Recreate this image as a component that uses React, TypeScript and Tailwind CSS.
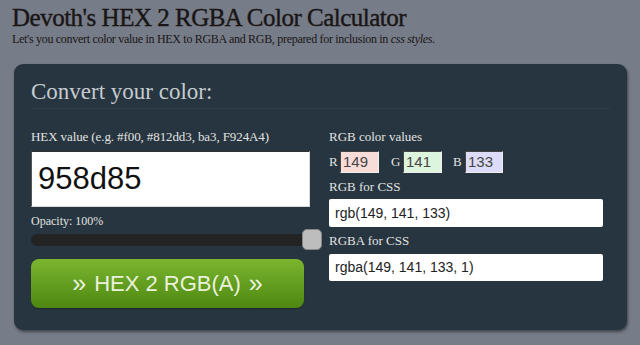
import React, { useState } from 'react';

const serif = "font-['Palatino_Linotype','Liberation_Serif',serif]";
const sans = "font-['Liberation_Sans',Arial,sans-serif]";

export default function App() {
  const [hex] = useState('958d85');
  const [opacity] = useState(100);

  return (
    <div className={`h-[345px] w-[640px] overflow-hidden bg-[#767c88] ${serif}`}>
      <div className="pl-3 pt-[3px]">
        <h1 className="text-[25px] leading-[30px] tracking-[-0.5px] text-[#1a1616] [-webkit-text-stroke:0.4px_#1a1616]">Devoth's HEX 2 RGBA Color Calculator</h1>
        <p className="-mt-[1px] text-[12px] leading-[15px] tracking-[-0.3px] text-[#1a1616]">
          Let's you convert color value in HEX to RGBA and RGB, prepared for inclusion in <em>css styles</em>.
        </p>
      </div>

      <div className="ml-[14px] mt-[17px] h-[266px] w-[613px] rounded-[9px] bg-[#26353f] px-[17px] pt-[15px] shadow-[1px_2px_3px_rgba(0,0,0,0.45)]">
        <h2 className="text-[23px] leading-[26px] text-[#c5cbd0]">Convert your color:</h2>
        <div className="mt-[3px] h-px w-[579px] bg-[#2e3e48]" />

        <div className="mt-[20px] flex gap-[19px]">
          {/* left column */}
          <div className="w-[279px]">
            <label className="block text-[13px] leading-[16px] tracking-[-0.1px] text-[#e2e2e2]">HEX value (e.g. #f00, #812dd3, ba3, F924A4)</label>
            <div className={`mt-[6px] flex h-[56px] items-center border border-[#d8d8d8] border-t-[#333] border-l-[#555] bg-white pl-[6px] text-[31px] text-[#111] ${sans}`}>
              {hex}
            </div>
            <div className="mt-[7px] text-[12px] leading-[14px] text-[#e2e2e2]">Opacity: {opacity}%</div>
            <div className="relative mt-[6px] h-[12px] w-[279px] rounded-[6px] bg-[#232323]">
              <div className="absolute left-[271px] top-[-5px] h-[21px] w-[20px] rounded-[5px] border border-[#888] bg-[#bdbdbd]" />
            </div>
            <button className={`mt-[13px] flex h-[49px] w-[273px] items-center justify-center gap-[8px] rounded-[8px] bg-gradient-to-b from-[#7bb52f] to-[#4e8810] text-[22px] text-[#e9f1dd] shadow-[0_1px_1px_rgba(0,0,0,0.3)] ${sans}`}>
              <span className="text-[25px] leading-none">»</span>
              <span>HEX 2 RGB(A)</span>
              <span className="text-[25px] leading-none">»</span>
            </button>
          </div>

          {/* right column */}
          <div className="w-[274px]">
            <div className="text-[13px] leading-[16px] text-[#e2e2e2]">RGB color values</div>
            <div className="mt-[6px] flex items-center text-[13px] text-[#e2e2e2]">
              <span className="w-[11px]">R</span>
              <div className={`flex h-[22px] w-[39px] items-center border border-[#eee] border-t-[#444] border-l-[#444] bg-[#f8dcd8] pl-[2px] text-[15px] text-[#444] ${sans}`}>149</div>
              <span className="ml-[12px] w-[12px]">G</span>
              <div className={`flex h-[22px] w-[39px] items-center border border-[#eee] border-t-[#444] border-l-[#444] bg-[#dcf5dc] pl-[2px] text-[15px] text-[#444] ${sans}`}>141</div>
              <span className="ml-[11px] w-[12px]">B</span>
              <div className={`flex h-[22px] w-[38px] items-center border border-[#eee] border-t-[#444] border-l-[#444] bg-[#dcdcf8] pl-[2px] text-[15px] text-[#444] ${sans}`}>133</div>
            </div>
            <div className="mt-[6px] text-[13px] leading-[16px] text-[#e2e2e2]">RGB for CSS</div>
            <div className={`mt-[4px] flex h-[28px] items-center rounded-[2px] bg-white pl-[6px] text-[14px] text-[#222] ${sans}`}>rgb(149, 141, 133)</div>
            <div className="mt-[6px] text-[13px] leading-[16px] text-[#e2e2e2]">RGBA for CSS</div>
            <div className={`mt-[5px] flex h-[27px] items-center rounded-[2px] bg-white pl-[6px] text-[14px] text-[#222] ${sans}`}>rgba(149, 141, 133, 1)</div>
          </div>
        </div>
      </div>
    </div>
  );
}
